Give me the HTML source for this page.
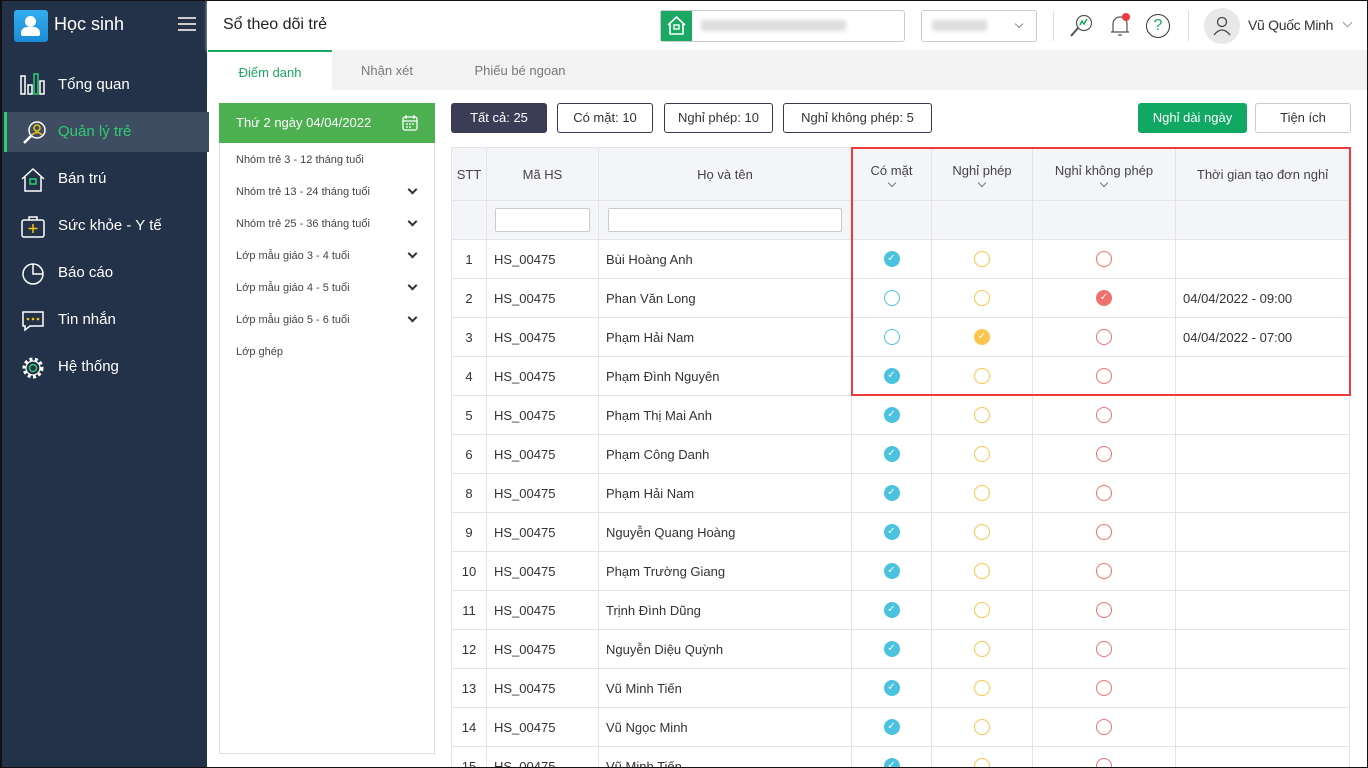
<!DOCTYPE html><html style="overflow:hidden;height:768px"><head><meta charset="utf-8"><style>
*{box-sizing:border-box;margin:0;padding:0}
body{width:1368px;height:768px;overflow:hidden;font-family:"Liberation Sans",sans-serif;background:#fff;position:relative;color:#333;font-size:13px}
.abs{position:absolute}
#sb{left:0;top:0;width:207px;height:768px;background:#233248;border-left:2px solid #111;border-top:1px solid #111}
.nav{position:absolute;left:2px;width:205px;height:40px;color:#fff;font-size:15px;line-height:40px;padding-left:54px}
.nav svg{position:absolute;left:16px;top:8px}
#hdr{left:207px;top:0;width:1161px;height:50px;background:#fff;border-top:1px solid #111;border-right:1px solid #111;box-shadow:0 1px 3px #ddd}
#tabs{left:207px;top:50px;width:1161px;height:40px;background:#f3f3f3}
.tab{position:absolute;top:0;height:40px;line-height:42px;font-size:13px;color:#777;text-align:center}
.btn{position:absolute;top:103px;height:30px;border:1px solid #3a3a4a;border-radius:3px;line-height:28px;text-align:center;font-size:13px;color:#333;background:#fff}
#wrap{position:absolute;left:451px;top:147px;width:900px;height:620px;overflow:hidden}
table{border-collapse:collapse;font-size:13px;table-layout:fixed}
td,th{border:1px solid #e4e4e4;height:39px;font-weight:normal}
th{background:#f4f5f8;color:#444}
td{padding-left:7px}
td.c{text-align:center;padding:0}
.o{display:inline-block;width:16px;height:16px;border-radius:50%;border:1px solid;vertical-align:middle}
.f{display:inline-block;width:16px;height:16px;border-radius:50%;vertical-align:middle;color:#fff;font-size:10px;line-height:16px;text-align:center}
.b{border-color:#4cc3de}.y{border-color:#fbc54b}.r{border-color:#f07070}
.fb{background:#4cc3de}.fy{background:#fbc54b}.fr{background:#f07070}
.lp{position:absolute;left:236px;font-size:11px;color:#444}
.chev{position:absolute;left:409px;width:7px;height:7px;border-right:2px solid #333;border-bottom:2px solid #333;transform:rotate(45deg)}
.dc{display:block;margin:2px auto 0;width:6px;height:6px;border-right:1px solid #777;border-bottom:1px solid #777;transform:rotate(45deg)}
</style></head><body>
<div id="sb" class="abs">
<div class="abs" style="left:12px;top:9px;width:34px;height:32px;border-radius:3px;background:linear-gradient(#33aef0,#1b8bd6)"><div class="abs" style="left:11px;top:6px;width:11px;height:11px;border-radius:50%;background:#fff"></div><div class="abs" style="left:7px;top:17px;width:19px;height:9px;border-radius:6px 6px 2px 2px;background:#fff"></div></div>
<div class="abs" style="left:52px;top:13px;color:#fff;font-size:18px">Học sinh</div>
<div class="abs" style="left:176px;top:16px;width:18px;height:2px;background:#ccc;box-shadow:0 6px 0 #ccc,0 12px 0 #ccc"></div>
<div class="nav" style="top:64px"><svg width="26" height="24"><rect x="1" y="3" width="4" height="18" fill="none" stroke="#fff" stroke-width="1.5"/><rect x="8" y="12" width="4" height="9" fill="none" stroke="#fff" stroke-width="1.5"/><rect x="14" y="1" width="4" height="20" fill="none" stroke="#2ecc71" stroke-width="1.5"/><rect x="20" y="8" width="4" height="13" fill="none" stroke="#fff" stroke-width="1.5"/></svg>Tổng quan</div>
<div class="nav" style="top:111px;background:#3f4d63;border-left:3px solid #2ecc71;color:#2ecc71;padding-left:51px"><svg width="26" height="26" style="left:15px"><circle cx="15" cy="10" r="8" fill="none" stroke="#fff" stroke-width="1.5"/><circle cx="15" cy="8" r="3" fill="none" stroke="#f1c40f" stroke-width="1.5"/><path d="M10 15q5-5 10 0" fill="none" stroke="#f1c40f" stroke-width="1.5"/><path d="M9 16L2 23" stroke="#fff" stroke-width="2.5"/></svg>Quản lý trẻ</div>
<div class="nav" style="top:158px"><svg width="26" height="26"><path d="M2 12L13 2L24 12M5 10v14h16V10" fill="none" stroke="#fff" stroke-width="1.5"/><rect x="10" y="12" width="6" height="5" fill="none" stroke="#2ecc71" stroke-width="1.5"/></svg>Bán trú</div>
<div class="nav" style="top:205px"><svg width="26" height="26"><rect x="2" y="6" width="22" height="17" rx="2" fill="none" stroke="#fff" stroke-width="1.5"/><path d="M9 6V3h8v3" fill="none" stroke="#fff" stroke-width="1.5"/><path d="M13 10v9M8.5 14.5h9" stroke="#f1c40f" stroke-width="1.5"/></svg>Sức khỏe - Y tế</div>
<div class="nav" style="top:252px"><svg width="26" height="26"><circle cx="13" cy="13" r="10" fill="none" stroke="#fff" stroke-width="1.5"/><path d="M13 3v10h10" fill="none" stroke="#fff" stroke-width="1.5"/></svg>Báo cáo</div>
<div class="nav" style="top:299px"><svg width="26" height="26"><path d="M3 4h20v14H10l-5 4v-4H3z" fill="none" stroke="#fff" stroke-width="1.5"/><circle cx="8" cy="11" r="1.3" fill="#f1c40f"/><circle cx="13" cy="11" r="1.3" fill="#f1c40f"/><circle cx="18" cy="11" r="1.3" fill="#f1c40f"/></svg>Tin nhắn</div>
<div class="nav" style="top:346px"><svg width="26" height="26"><circle cx="13" cy="13" r="9" fill="none" stroke="#fff" stroke-width="3" stroke-dasharray="3 2.5"/><circle cx="13" cy="13" r="7" fill="none" stroke="#fff" stroke-width="1.2"/><circle cx="13" cy="13" r="3.5" fill="none" stroke="#2ecc71" stroke-width="1.5"/></svg>Hệ thống</div>
</div>
<div id="hdr" class="abs">
<div class="abs" style="left:16px;top:15px;font-size:16px;color:#222">Sổ theo dõi trẻ</div>
<div class="abs" style="left:453px;top:9px;width:245px;height:32px;border:1px solid #ccc;border-radius:3px"><div style="width:31px;height:30px;background:#1aa862"><svg width="31" height="30"><path d="M7 14L15.5 6L24 14M9 12v11h13V12" fill="none" stroke="#fff" stroke-width="1.6"/><rect x="13" y="14" width="5" height="4" fill="none" stroke="#fff" stroke-width="1.4"/></svg></div><div class="abs" style="left:40px;top:9px;width:145px;height:11px;background:#ddd;filter:blur(2px)"></div></div>
<div class="abs" style="left:714px;top:9px;width:116px;height:32px;border:1px solid #ccc;border-radius:3px"><div class="abs" style="left:10px;top:9px;width:55px;height:11px;background:#ddd;filter:blur(2px)"></div><div class="abs" style="left:94px;top:10px;width:6px;height:6px;border-right:1px solid #888;border-bottom:1px solid #888;transform:rotate(45deg)"></div></div>
<div class="abs" style="left:846px;top:10px;width:1px;height:30px;background:#ddd"></div>
<svg class="abs" style="left:862px;top:12px" width="26" height="26"><circle cx="15" cy="10" r="7.5" fill="none" stroke="#555" stroke-width="1.2"/><path d="M11 12l2-4 2 3 3-5" fill="none" stroke="#1aa862" stroke-width="1.5"/><path d="M9 15l-7 8" stroke="#555" stroke-width="2"/></svg>
<svg class="abs" style="left:900px;top:11px" width="26" height="28"><path d="M6 20V12a7 7 0 0 1 14 0v8H4h18M11 23h4" fill="none" stroke="#555" stroke-width="1.2"/><circle cx="19" cy="5" r="4" fill="#f03a3a"/></svg>
<div class="abs" style="left:939px;top:13px;width:24px;height:24px;border:1.2px solid #333;border-radius:50%;text-align:center;line-height:22px;color:#1aa862;font-size:16px">?</div>
<div class="abs" style="left:981px;top:10px;width:1px;height:30px;background:#ddd"></div>
<div class="abs" style="left:997px;top:7px;width:36px;height:36px;border-radius:50%;background:#e8e8e8"><svg width="36" height="36"><circle cx="18" cy="14" r="4.5" fill="none" stroke="#444" stroke-width="1.3"/><path d="M10 27q8-10 16 0" fill="none" stroke="#444" stroke-width="1.3"/></svg></div>
<div class="abs" style="left:1041px;top:16px;font-size:14px;letter-spacing:-0.3px">Vũ Quốc Minh</div>
<div class="abs" style="left:1137px;top:18px;width:7px;height:7px;border-right:1px solid #999;border-bottom:1px solid #999;transform:rotate(45deg)"></div>
</div>
<div id="tabs" class="abs">
<div class="tab" style="left:1px;width:124px;background:#fff;border-top:2px solid #1aa862;color:#1aa862">Điểm danh</div>
<div class="tab" style="left:125px;width:110px">Nhận xét</div>
<div class="tab" style="left:250px;width:126px">Phiếu bé ngoan</div>
</div>
<div class="abs" style="left:219px;top:103px;width:216px;height:651px;border:1px solid #ddd"></div>
<div class="abs" style="left:219px;top:103px;width:216px;height:40px;background:#4caf50;color:#fff;font-size:13px;line-height:40px;padding-left:17px">Thứ 2 ngày 04/04/2022<svg class="abs" style="left:183px;top:12px" width="16" height="16"><rect x="1" y="2" width="14" height="13" rx="2" fill="none" stroke="#fff" stroke-width="1.3"/><path d="M1 6h14M4 0v4M12 0v4M4 9h2M7 9h2M10 9h2M4 12h2M7 12h2" stroke="#fff" stroke-width="1.2"/></svg></div>
<div class="lp" style="top:154px">Nhóm trẻ 3 - 12 tháng tuổi</div>
<div class="lp" style="top:186px">Nhóm trẻ 13 - 24 tháng tuổi</div><div class="chev" style="top:186px"></div>
<div class="lp" style="top:218px">Nhóm trẻ 25 - 36 tháng tuổi</div><div class="chev" style="top:218px"></div>
<div class="lp" style="top:250px">Lớp mẫu giáo 3 - 4 tuổi</div><div class="chev" style="top:250px"></div>
<div class="lp" style="top:282px">Lớp mẫu giáo 4 - 5 tuổi</div><div class="chev" style="top:282px"></div>
<div class="lp" style="top:314px">Lớp mẫu giáo 5 - 6 tuổi</div><div class="chev" style="top:314px"></div>
<div class="lp" style="top:346px">Lớp ghép</div>
<div class="btn" style="left:451px;width:96px;background:#3a3d55;color:#fff">Tất cả: 25</div>
<div class="btn" style="left:557px;width:96px">Có mặt: 10</div>
<div class="btn" style="left:664px;width:109px">Nghỉ phép: 10</div>
<div class="btn" style="left:783px;width:149px">Nghỉ không phép: 5</div>
<div class="btn" style="left:1138px;width:109px;background:#11a864;border-color:#11a864;color:#fff">Nghỉ dài ngày</div>
<div class="btn" style="left:1255px;width:96px;border-color:#ccc">Tiện ích</div>
<div id="wrap"><table>
<colgroup><col style="width:35px"><col style="width:112px"><col style="width:253px"><col style="width:80px"><col style="width:101px"><col style="width:143px"><col style="width:174px"></colgroup>
<tr><th style="height:53px">STT</th><th>Mã HS</th><th>Họ và tên</th><th>Có mặt<i class="dc"></i></th><th>Nghỉ phép<i class="dc"></i></th><th>Nghỉ không phép<i class="dc"></i></th><th>Thời gian tạo đơn nghỉ</th></tr>
<tr><th></th><th><div style="margin:0 8px;height:24px;background:#fff;border:1px solid #ccc;border-radius:2px"></div></th><th><div style="margin:0 9px;height:24px;background:#fff;border:1px solid #ccc;border-radius:2px"></div></th><th></th><th></th><th></th><th></th></tr>
<tr><td class="c">1</td><td>HS_00475</td><td>Bùi Hoàng Anh</td><td class="c"><span class="f fb">✓</span></td><td class="c"><span class="o y"></span></td><td class="c"><span class="o r"></span></td><td></td></tr>
<tr><td class="c">2</td><td>HS_00475</td><td>Phan Văn Long</td><td class="c"><span class="o b"></span></td><td class="c"><span class="o y"></span></td><td class="c"><span class="f fr">✓</span></td><td>04/04/2022 - 09:00</td></tr>
<tr><td class="c">3</td><td>HS_00475</td><td>Phạm Hải Nam</td><td class="c"><span class="o b"></span></td><td class="c"><span class="f fy">✓</span></td><td class="c"><span class="o r"></span></td><td>04/04/2022 - 07:00</td></tr>
<tr><td class="c">4</td><td>HS_00475</td><td>Phạm Đình Nguyên</td><td class="c"><span class="f fb">✓</span></td><td class="c"><span class="o y"></span></td><td class="c"><span class="o r"></span></td><td></td></tr>
<tr><td class="c">5</td><td>HS_00475</td><td>Phạm Thị Mai Anh</td><td class="c"><span class="f fb">✓</span></td><td class="c"><span class="o y"></span></td><td class="c"><span class="o r"></span></td><td></td></tr>
<tr><td class="c">6</td><td>HS_00475</td><td>Phạm Công Danh</td><td class="c"><span class="f fb">✓</span></td><td class="c"><span class="o y"></span></td><td class="c"><span class="o r"></span></td><td></td></tr>
<tr><td class="c">8</td><td>HS_00475</td><td>Phạm Hải Nam</td><td class="c"><span class="f fb">✓</span></td><td class="c"><span class="o y"></span></td><td class="c"><span class="o r"></span></td><td></td></tr>
<tr><td class="c">9</td><td>HS_00475</td><td>Nguyễn Quang Hoàng</td><td class="c"><span class="f fb">✓</span></td><td class="c"><span class="o y"></span></td><td class="c"><span class="o r"></span></td><td></td></tr>
<tr><td class="c">10</td><td>HS_00475</td><td>Phạm Trường Giang</td><td class="c"><span class="f fb">✓</span></td><td class="c"><span class="o y"></span></td><td class="c"><span class="o r"></span></td><td></td></tr>
<tr><td class="c">11</td><td>HS_00475</td><td>Trịnh Đình Dũng</td><td class="c"><span class="f fb">✓</span></td><td class="c"><span class="o y"></span></td><td class="c"><span class="o r"></span></td><td></td></tr>
<tr><td class="c">12</td><td>HS_00475</td><td>Nguyễn Diệu Quỳnh</td><td class="c"><span class="f fb">✓</span></td><td class="c"><span class="o y"></span></td><td class="c"><span class="o r"></span></td><td></td></tr>
<tr><td class="c">13</td><td>HS_00475</td><td>Vũ Minh Tiến</td><td class="c"><span class="f fb">✓</span></td><td class="c"><span class="o y"></span></td><td class="c"><span class="o r"></span></td><td></td></tr>
<tr><td class="c">14</td><td>HS_00475</td><td>Vũ Ngọc Minh</td><td class="c"><span class="f fb">✓</span></td><td class="c"><span class="o y"></span></td><td class="c"><span class="o r"></span></td><td></td></tr>
<tr><td class="c">15</td><td>HS_00475</td><td>Vũ Minh Tiến</td><td class="c"><span class="f fb">✓</span></td><td class="c"><span class="o y"></span></td><td class="c"><span class="o r"></span></td><td></td></tr>
</table></div>
<div class="abs" style="left:851px;top:147px;width:500px;height:249px;border:2px solid #ef3b3b"></div>
<div class="abs" style="left:1367px;top:0;width:1px;height:768px;background:#111"></div>
<div class="abs" style="left:0;top:767px;width:1368px;height:1px;background:#111"></div>
</body></html>
